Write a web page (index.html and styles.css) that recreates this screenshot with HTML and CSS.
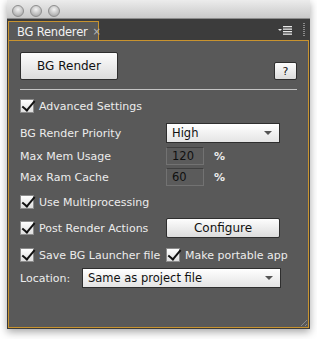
FILE: index.html
```html
<!DOCTYPE html>
<html lang="en">
<head>
    <meta charset="UTF-8">
    <title>BG Renderer</title>
    <link rel="stylesheet" href="styles.css">
</head>
<body>
    <div class="window">
        <!-- Title bar with traffic lights -->
        <div class="titlebar">
            <span class="light"></span>
            <span class="light"></span>
            <span class="light"></span>
        </div>

        <!-- Tab strip -->
        <div class="tabstrip">
            <div class="tab">
                <span class="grip"></span>
                <span class="tab-title">BG Renderer</span>
                <span class="tab-close">&times;</span>
            </div>
            <div class="tab-tools">
                <svg class="menu-icon" width="14" height="9" viewBox="0 0 14 9">
                    <path d="M0 3 L4 3 L2 5 Z" fill="#e8e8e8"/>
                    <rect x="5" y="0" width="9" height="1.3" fill="#e8e8e8"/>
                    <rect x="5" y="2.5" width="9" height="1.3" fill="#e8e8e8"/>
                    <rect x="5" y="5" width="9" height="1.3" fill="#e8e8e8"/>
                    <rect x="5" y="7.5" width="9" height="1.3" fill="#e8e8e8"/>
                </svg>
                <span class="strip-grip"></span>
            </div>
        </div>

        <!-- Panel -->
        <section class="panel">
            <div class="top-row">
                <button class="btn btn-main">BG Render</button>
                <button class="btn btn-help">?</button>
            </div>
            <div class="divider"></div>

            <label class="row row-advanced">
                <span class="check"></span>Advanced Settings
            </label>

            <div class="row row-priority">
                <span class="label">BG Render Priority</span>
                <div class="select select-priority">High<span class="arrow"></span></div>
            </div>

            <div class="row row-mem">
                <span class="label">Max Mem Usage</span>
                <div class="field">120</div>
                <span class="unit">%</span>
            </div>

            <div class="row row-ram">
                <span class="label">Max Ram Cache</span>
                <div class="field">60</div>
                <span class="unit">%</span>
            </div>

            <label class="row row-multi">
                <span class="check"></span>Use Multiprocessing
            </label>

            <div class="row row-post">
                <label class="label checked-label"><span class="check"></span>Post Render Actions</label>
                <button class="btn btn-config">Configure</button>
            </div>

            <div class="row row-save">
                <label class="label checked-label"><span class="check"></span>Save BG Launcher file</label>
                <label class="checked-label"><span class="check"></span>Make portable app</label>
            </div>

            <div class="row row-location">
                <span class="loc-label">Location:</span>
                <div class="select select-location">Same as project file<span class="arrow"></span></div>
            </div>
            <span class="resize"></span>
        </section>
    </div>
</body>
</html>
```

FILE: styles.css
```css
* {
    margin: 0;
    padding: 0;
    box-sizing: border-box;
}

body {
    font-family: 'DejaVu Sans', 'Liberation Sans', sans-serif;
    font-size: 11px;
    background-color: #fff;
    width: 317px;
    height: 339px;
    overflow: hidden;
}

/* Window frame */
.window {
    margin-left: 7px;
    width: 303px;
    height: 329px;
    background-color: #3a3a3a;
    box-shadow: 0 3px 8px rgba(0, 0, 0, 0.35);
    display: flex;
    flex-direction: column;
}

.titlebar {
    height: 19px;
    background: linear-gradient(#ececec, #c9c9c9);
    border-bottom: 1px solid #8c8c8c;
    display: flex;
    align-items: center;
    gap: 6px;
    padding: 4px 0 0 5px;
}

.light {
    width: 12px;
    height: 12px;
    border-radius: 50%;
    background: radial-gradient(circle at 50% 35%, #f4f4f4, #b5b5b5 70%, #9a9a9a);
    border: 1px solid #8e8e8e;
}

/* Tab strip */
.tabstrip {
    height: 21px;
    display: flex;
    align-items: flex-end;
    justify-content: space-between;
    background-color: #3c3c3c;
    padding-left: 1px;
}

.tab {
    width: 91px;
    height: 20px;
    background-color: #595959;
    border: 1px solid #c8932f;
    border-bottom: none;
    display: flex;
    align-items: center;
    padding-left: 3px;
    color: #f2f2f2;
    font-size: 11.5px;
    white-space: nowrap;
    position: relative;
    top: 1px;
}

.grip {
    width: 2px;
    height: 12px;
    margin-right: 5px;
    background: repeating-linear-gradient(#9a9a9a 0 1px, transparent 1px 2px);
}

.tab-title {
    letter-spacing: -0.2px;
}

.tab-close {
    margin-left: 5px;
    font-size: 10px;
    color: #b5b5b5;
}

.tab-tools {
    display: flex;
    align-items: center;
    height: 21px;
    gap: 11px;
    padding-right: 5px;
}

.menu-icon {
    margin-top: 1px;
}

.strip-grip {
    width: 2px;
    height: 14px;
    background: repeating-linear-gradient(#8a8a8a 0 1px, transparent 1px 2px);
}

/* Panel */
.panel {
    position: relative;
    margin-left: 1px;
    width: 301px;
    height: 288px;
    background-color: #595959;
    border: 1px solid #c8932f;
    padding: 11px 11px 0 11px;
    color: #ececec;
    display: flex;
    flex-direction: column;
}

.btn {
    font-family: inherit;
    font-size: 12px;
    color: #111;
    background: linear-gradient(#fdfdfd, #dcdcdc);
    border: 1px solid #2e2e2e;
    border-radius: 2px;
}

.top-row {
    display: flex;
    justify-content: space-between;
    align-items: flex-end;
}

.btn-main {
    width: 98px;
    height: 28px;
}

.btn-help {
    width: 23px;
    height: 18px;
    font-size: 11px;
}

.divider {
    margin-top: 9px;
    height: 1px;
    background-color: #c4c4c4;
}

.row {
    display: flex;
    align-items: center;
    height: 18px;
    white-space: nowrap;
}

.label {
    width: 146px;
}

.check {
    width: 14px;
    height: 14px;
    margin-right: 5px;
    background: linear-gradient(#ffffff, #dedede);
    border: 1px solid #8c8c8c;
    position: relative;
    flex-shrink: 0;
}

/* check mark drawn as a rotated L */
.check::after {
    content: "";
    position: absolute;
    left: 4px;
    top: -2px;
    width: 5px;
    height: 11px;
    border-right: 2.5px solid #111;
    border-bottom: 2.5px solid #111;
    transform: rotate(40deg);
}

.checked-label {
    display: flex;
    align-items: center;
}

.row-advanced { margin-top: 7px; }
.row-priority { margin-top: 8px; height: 20px; }
.row-mem { margin-top: 4px; }
.row-ram { margin-top: 3px; }
.row-multi { margin-top: 7px; }
.row-post { margin-top: 7px; height: 20px; }
.row-save { margin-top: 8px; }
.row-location { margin-top: 4px; height: 20px; }

.select {
    height: 20px;
    background: linear-gradient(#ffffff, #e4e4e4);
    border: 1px solid #2e2e2e;
    color: #111;
    font-size: 11.5px;
    display: flex;
    align-items: center;
    justify-content: space-between;
    padding: 0 7px 0 5px;
}

.select-priority { width: 114px; }

.arrow {
    width: 0;
    height: 0;
    border-left: 4px solid transparent;
    border-right: 4px solid transparent;
    border-top: 4px solid #555;
}

.field {
    width: 38px;
    height: 18px;
    border: 1px solid #727272;
    border-top-color: #3f3f3f;
    background-color: #5b5b5b;
    color: #101010;
    font-size: 11.5px;
    display: flex;
    align-items: center;
    padding-left: 5px;
}

.unit {
    margin-left: 10px;
    font-weight: bold;
}

.btn-config {
    width: 114px;
    height: 20px;
}

.loc-label {
    width: 62px;
}

.select-location { width: 199px; }

.resize {
    position: absolute;
    right: 1px;
    bottom: 1px;
    width: 9px;
    height: 9px;
    background: repeating-linear-gradient(135deg, transparent 0 2px, #8a8a8a 2px 3px);
    clip-path: polygon(100% 0, 100% 100%, 0 100%);
}
```
